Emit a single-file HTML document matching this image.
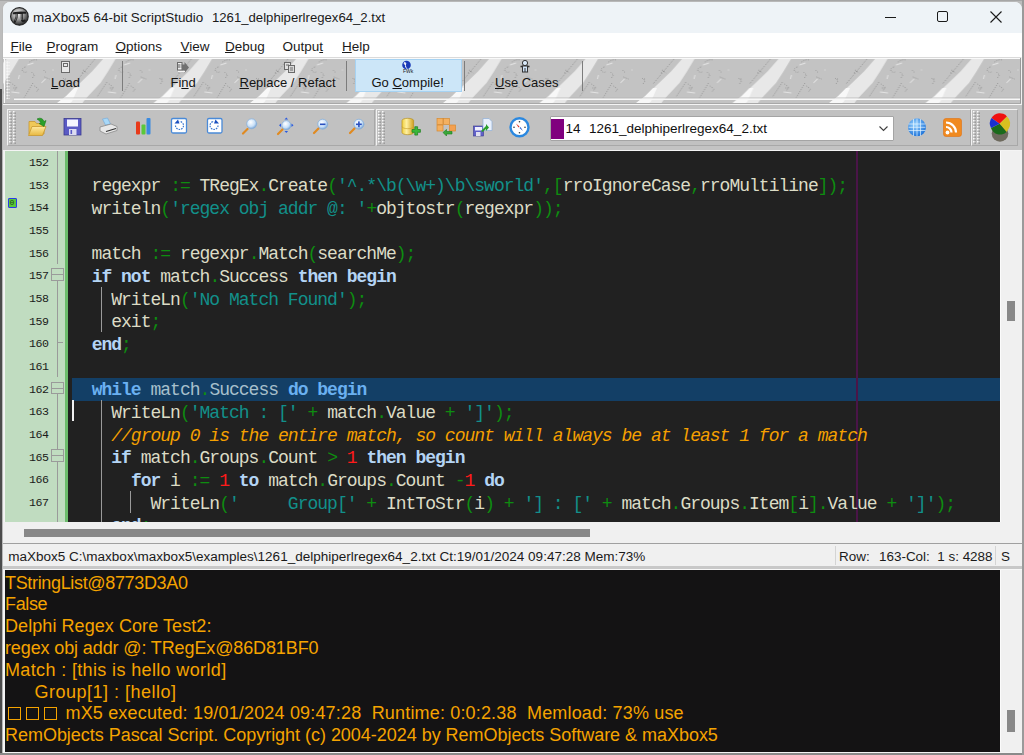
<!DOCTYPE html><html><head><meta charset="utf-8"><style>
*{margin:0;padding:0;box-sizing:border-box}
html,body{width:1024px;height:755px;overflow:hidden;background:#bdbdbd;font-family:"Liberation Sans",sans-serif;position:relative}
.a{position:absolute}
.t{position:absolute;white-space:pre;line-height:1}
.u{text-decoration:underline;text-decoration-thickness:1px;text-underline-offset:0.5px}
.code{position:absolute;left:0;white-space:pre;font-family:"Liberation Mono",monospace;font-size:18px;letter-spacing:-0.99px;line-height:22.67px;height:22.67px;color:#dcdcc6}
.o{color:#0e8c10}.s{color:#12908a}.k{color:#b4d4f4;font-weight:bold}.n{color:#ff1a1a}.c{color:#f5a000;font-style:italic}
.sel .k{color:#6ab0f0}.sel{color:#a8c0cc}
.ln{position:absolute;left:0;width:48.7px;text-align:right;font-family:'Liberation Mono',monospace;font-size:11.6px;letter-spacing:-0.4px;color:#1a1a1a;line-height:22.67px;height:22.67px}
.out{position:absolute;left:5px;white-space:pre;font-size:18px;color:#f5a300;line-height:21.7px}
.ico{position:absolute}
</style></head><body>
<div class="a" style="left:0;top:89px;width:2px;height:666px;background:#4b4b4b"></div>
<div class="a" style="left:0;top:0;width:1024px;height:1px;background:#a6a6a6"></div>
<div class="a" style="left:2px;top:1px;width:1021px;height:753px;background:#f0f0f0;border-radius:8px 8px 0 0;border:1px solid #b8b8b8;border-bottom:none"></div>
<div class="a" style="left:3px;top:2px;width:1019px;height:31px;background:#eef3f7;border-radius:7px 7px 0 0"></div>
<div class="a" style="left:3px;top:33px;width:1019px;height:24px;background:#ffffff"></div>
<svg class="ico" style="left:10px;top:7px" width="19" height="19" viewBox="0 0 19 19">
<defs><radialGradient id="gball" cx="0.42" cy="0.35" r="0.65"><stop offset="0" stop-color="#f4f4f4"/><stop offset="0.45" stop-color="#a8a8a8"/><stop offset="1" stop-color="#2a2a2a"/></radialGradient></defs>
<circle cx="9.4" cy="9.4" r="8.8" fill="url(#gball)" stroke="#262626" stroke-width="1.2"/>
<path d="M3.8 6.3 Q9 5.2 15.2 5.8 M6.8 6 Q7.2 11 4.8 14.8 M11.8 6 Q11.6 11 12.2 13.6 Q13 14.6 14.6 13.6" stroke="#202020" stroke-width="2.1" fill="none" stroke-linecap="round"/>
<path d="M6.6 6.8 Q6.8 10.5 5.4 13.5 M11.6 7 Q11.5 10.5 11.9 13" stroke="#9a9a9a" stroke-width="0.7" fill="none"/>
</svg>
<div class="t" style="left:33px;top:11px;font-size:13.45px;color:#1a1a1a">maXbox5 64-bit ScriptStudio</div>
<div class="t" style="left:212px;top:11px;font-size:13.15px;color:#1a1a1a">1261_delphiperlregex64_2.txt</div>
<div class="a" style="left:885px;top:17px;width:11px;height:1px;background:#1a1a1a"></div>
<div class="a" style="left:937px;top:11px;width:11px;height:11px;border:1px solid #1a1a1a;border-radius:2px"></div>
<svg class="ico" style="left:990px;top:11px" width="12" height="12" viewBox="0 0 12 12"><path d="M0.5 0.5 L11.5 11.5 M11.5 0.5 L0.5 11.5" stroke="#1a1a1a" stroke-width="1.1"/></svg>
<div class="t" style="left:10.5px;top:39.6px;font-size:13.5px;color:#1a1a1a"><span class="u">F</span>ile</div>
<div class="t" style="left:46.5px;top:39.6px;font-size:13.5px;color:#1a1a1a"><span class="u">P</span>rogram</div>
<div class="t" style="left:115.5px;top:39.6px;font-size:13.5px;color:#1a1a1a"><span class="u">O</span>ptions</div>
<div class="t" style="left:180.5px;top:39.6px;font-size:13.5px;color:#1a1a1a"><span class="u">V</span>iew</div>
<div class="t" style="left:225.0px;top:39.6px;font-size:13.5px;color:#1a1a1a"><span class="u">D</span>ebug</div>
<div class="t" style="left:282.5px;top:39.6px;font-size:13.5px;color:#1a1a1a">Outpu<span class="u">t</span></div>
<div class="t" style="left:342.0px;top:39.6px;font-size:13.5px;color:#1a1a1a"><span class="u">H</span>elp</div>
<svg class="ico" style="left:0;top:0" width="1024" height="110" viewBox="0 0 1024 110">
<defs>
<pattern id="tex" patternUnits="userSpaceOnUse" x="55" y="57" width="96.5" height="47">
<rect x="0" y="0" width="96.5" height="47" fill="#c3c3c3"/>
<polygon points="48,2 60.5,2 53,14.6 45.5,26 33,39.2 28.5,44.5 27,47 1,47 4,44.5 11,39.2 25,26 37,14.6" fill="#e8e8e8"/>
<polygon points="4,44.5 11,39.2 19,31 23,31 17,44.5 14,47 1,47" fill="#f8f8f8"/>
<g stroke="#8e8e8e" stroke-width="0.9" fill="none" stroke-dasharray="1 1.3">
<path d="M40 2 L19 27"/><path d="M28 13 l4 3 M27 16 l3 -2"/>
<path d="M8 21 l3 3 l-2 3 M10 22 l2 0"/>
<path d="M52 25 L42 40"/><path d="M54 27 l4 3 l-2 4 M55 31 l3 0"/>
<path d="M71 5 q4 -3 8 -2"/>
<path d="M67 10 q-4 1 -3 4 q2 2 4 1"/>
<path d="M73 15 l3 3 l-2 3"/>
<path d="M74.5 26 L65.5 41"/><path d="M76 29 l4 3 l-2 3"/>
<path d="M86 20 l5 2"/><path d="M85 13 l3 3"/>
<path d="M-20 27 L-4 8"/>
</g>
<g stroke="#ececec" stroke-width="1" fill="none" opacity="0.75">
<path d="M69 8 l6 -2"/><path d="M61 18 l-1 4"/><path d="M83 26 l4 -4"/><path d="M94 13 l1 0"/><path d="M53 35 l8 1"/>
</g>
</pattern>
</defs>
<rect x="3" y="57" width="1018" height="47" fill="url(#tex)"/>
<rect x="3" y="57" width="1018" height="1" fill="#dadada"/>
<rect x="3" y="58" width="1018" height="1" fill="#fafafa"/>
<rect x="14" y="97.6" width="1006" height="0.9" fill="#b4b4b4"/><rect x="14" y="98.5" width="1006" height="1.5" fill="#f8f8f8"/>
<rect x="3" y="103" width="1018" height="1" fill="#a8a8a8"/>
<rect x="3" y="104" width="1018" height="1" fill="#f4f4f4"/>
<rect x="4" y="58" width="1" height="45" fill="#fafafa"/>
<rect x="1020" y="58" width="1" height="45" fill="#9a9a9a"/>
</svg>
<div class="a" style="left:6px;top:61px;width:4px;height:38px;background-image:radial-gradient(circle,#f8f8f8 0.9px,transparent 1.1px);background-size:3px 3px;opacity:.9"></div>
<div class="a" style="left:121.5px;top:60.5px;width:1.1px;height:30.5px;background:#7c7c7c"></div>
<div class="a" style="left:345.5px;top:60.5px;width:1.1px;height:30.5px;background:#7c7c7c"></div>
<div class="a" style="left:463.5px;top:60.5px;width:1.1px;height:30.5px;background:#7c7c7c"></div>
<div class="a" style="left:581.5px;top:60.5px;width:1.1px;height:30.5px;background:#7c7c7c"></div>
<div class="a" style="left:355px;top:59px;width:107px;height:33px;background:#cce6f8;border:1px solid #a6d2f2"></div>
<div class="t" style="left:51.0px;top:76px;font-size:13px;color:#141414"><span class="u">L</span>oad</div>
<div class="t" style="left:170.5px;top:76px;font-size:13px;color:#141414">Fi<span class="u">n</span>d</div>
<div class="t" style="left:239.5px;top:76px;font-size:13px;color:#141414"><span class="u">R</span>eplace / Refact</div>
<div class="t" style="left:371.5px;top:76px;font-size:13px;color:#141414">Go <span class="u">C</span>ompile!</div>
<div class="t" style="left:495.0px;top:76px;font-size:13px;color:#141414"><span class="u">U</span>se Cases</div>
<svg class="ico" style="left:0;top:0" width="600" height="80" viewBox="0 0 600 80">
<g fill="none" stroke="#6a6a6a" stroke-width="1">
<rect x="61.5" y="61.5" width="8" height="11" fill="#e8e8e8"/><rect x="63.5" y="63.5" width="4" height="3"/>
<rect x="177.5" y="62.5" width="4.5" height="7.5" fill="#f0f0f0"/><path d="M179 64v4M180.5 65h1M180.5 67h1" stroke="#555"/><path d="M182 64.5h2.5v-2.5l4.5 5.5l-4.5 5.5v-2.5h-2.5z" fill="#707070" stroke="none"/><path d="M178 71.5h7" stroke="#f4f4f4" stroke-width="1.2"/>
<rect x="284.5" y="62.5" width="6" height="7" fill="#e0e0e0"/><rect x="288.5" y="65.5" width="6" height="7" fill="#d8d8d8"/><path d="M286 65h3M290 68h3M290 70h3"/>
</g>
<circle cx="406.5" cy="65" r="4.3" fill="#1a3ab8"/><path d="M404 62.5q2 1 1.5 3t2 3.5" stroke="#fff" stroke-width="1" fill="none"/><circle cx="405" cy="63.5" r="1.3" fill="#ffffff" opacity=".8"/>
<text x="403" y="73" font-family="Liberation Sans" font-size="5" fill="#1a1a1a">FWk</text>
<g><circle cx="525" cy="63" r="2.6" fill="#d8e8f8" stroke="#333" stroke-width="1"/><path d="M520.5 66.5h9" stroke="#333" stroke-width="1.6"/><rect x="522.5" y="66" width="5" height="6" fill="#cfe2f6" stroke="#333" stroke-width="1"/><path d="M525 68v4" stroke="#333" stroke-width="1"/></g>
</svg>
<div class="a" style="left:3px;top:105px;width:1019px;height:46px;background:#c3c3c3"></div>
<div class="a" style="left:7px;top:109px;width:368px;height:37px;border-top:1px solid #f2f2f2;border-left:1px solid #f2f2f2;border-bottom:1px solid #a8a8a8;border-right:1px solid #a8a8a8;background:#c1c1c1"></div>
<svg class="ico" style="left:9px;top:111px" width="7" height="33" viewBox="0 0 7 33"><rect x="0" y="0" width="1.5" height="1.5" fill="#fafafa"/><rect x="1.5" y="1.5" width="1.3" height="1.3" fill="#8a8a8a"/><rect x="0" y="3" width="1.5" height="1.5" fill="#fafafa"/><rect x="1.5" y="4.5" width="1.3" height="1.3" fill="#8a8a8a"/><rect x="0" y="6" width="1.5" height="1.5" fill="#fafafa"/><rect x="1.5" y="7.5" width="1.3" height="1.3" fill="#8a8a8a"/><rect x="0" y="9" width="1.5" height="1.5" fill="#fafafa"/><rect x="1.5" y="10.5" width="1.3" height="1.3" fill="#8a8a8a"/><rect x="0" y="12" width="1.5" height="1.5" fill="#fafafa"/><rect x="1.5" y="13.5" width="1.3" height="1.3" fill="#8a8a8a"/><rect x="0" y="15" width="1.5" height="1.5" fill="#fafafa"/><rect x="1.5" y="16.5" width="1.3" height="1.3" fill="#8a8a8a"/><rect x="0" y="18" width="1.5" height="1.5" fill="#fafafa"/><rect x="1.5" y="19.5" width="1.3" height="1.3" fill="#8a8a8a"/><rect x="0" y="21" width="1.5" height="1.5" fill="#fafafa"/><rect x="1.5" y="22.5" width="1.3" height="1.3" fill="#8a8a8a"/><rect x="0" y="24" width="1.5" height="1.5" fill="#fafafa"/><rect x="1.5" y="25.5" width="1.3" height="1.3" fill="#8a8a8a"/><rect x="0" y="27" width="1.5" height="1.5" fill="#fafafa"/><rect x="1.5" y="28.5" width="1.3" height="1.3" fill="#8a8a8a"/><rect x="0" y="30" width="1.5" height="1.5" fill="#fafafa"/><rect x="1.5" y="31.5" width="1.3" height="1.3" fill="#8a8a8a"/><rect x="4" y="0" width="1.5" height="1.5" fill="#fafafa"/><rect x="5.5" y="1.5" width="1.3" height="1.3" fill="#8a8a8a"/><rect x="4" y="3" width="1.5" height="1.5" fill="#fafafa"/><rect x="5.5" y="4.5" width="1.3" height="1.3" fill="#8a8a8a"/><rect x="4" y="6" width="1.5" height="1.5" fill="#fafafa"/><rect x="5.5" y="7.5" width="1.3" height="1.3" fill="#8a8a8a"/><rect x="4" y="9" width="1.5" height="1.5" fill="#fafafa"/><rect x="5.5" y="10.5" width="1.3" height="1.3" fill="#8a8a8a"/><rect x="4" y="12" width="1.5" height="1.5" fill="#fafafa"/><rect x="5.5" y="13.5" width="1.3" height="1.3" fill="#8a8a8a"/><rect x="4" y="15" width="1.5" height="1.5" fill="#fafafa"/><rect x="5.5" y="16.5" width="1.3" height="1.3" fill="#8a8a8a"/><rect x="4" y="18" width="1.5" height="1.5" fill="#fafafa"/><rect x="5.5" y="19.5" width="1.3" height="1.3" fill="#8a8a8a"/><rect x="4" y="21" width="1.5" height="1.5" fill="#fafafa"/><rect x="5.5" y="22.5" width="1.3" height="1.3" fill="#8a8a8a"/><rect x="4" y="24" width="1.5" height="1.5" fill="#fafafa"/><rect x="5.5" y="25.5" width="1.3" height="1.3" fill="#8a8a8a"/><rect x="4" y="27" width="1.5" height="1.5" fill="#fafafa"/><rect x="5.5" y="28.5" width="1.3" height="1.3" fill="#8a8a8a"/><rect x="4" y="30" width="1.5" height="1.5" fill="#fafafa"/><rect x="5.5" y="31.5" width="1.3" height="1.3" fill="#8a8a8a"/></svg>
<div class="a" style="left:376px;top:109px;width:595px;height:37px;border-top:1px solid #f2f2f2;border-left:1px solid #f2f2f2;border-bottom:1px solid #a8a8a8;border-right:1px solid #a8a8a8;background:#c1c1c1"></div>
<svg class="ico" style="left:378px;top:111px" width="7" height="33" viewBox="0 0 7 33"><rect x="0" y="0" width="1.5" height="1.5" fill="#fafafa"/><rect x="1.5" y="1.5" width="1.3" height="1.3" fill="#8a8a8a"/><rect x="0" y="3" width="1.5" height="1.5" fill="#fafafa"/><rect x="1.5" y="4.5" width="1.3" height="1.3" fill="#8a8a8a"/><rect x="0" y="6" width="1.5" height="1.5" fill="#fafafa"/><rect x="1.5" y="7.5" width="1.3" height="1.3" fill="#8a8a8a"/><rect x="0" y="9" width="1.5" height="1.5" fill="#fafafa"/><rect x="1.5" y="10.5" width="1.3" height="1.3" fill="#8a8a8a"/><rect x="0" y="12" width="1.5" height="1.5" fill="#fafafa"/><rect x="1.5" y="13.5" width="1.3" height="1.3" fill="#8a8a8a"/><rect x="0" y="15" width="1.5" height="1.5" fill="#fafafa"/><rect x="1.5" y="16.5" width="1.3" height="1.3" fill="#8a8a8a"/><rect x="0" y="18" width="1.5" height="1.5" fill="#fafafa"/><rect x="1.5" y="19.5" width="1.3" height="1.3" fill="#8a8a8a"/><rect x="0" y="21" width="1.5" height="1.5" fill="#fafafa"/><rect x="1.5" y="22.5" width="1.3" height="1.3" fill="#8a8a8a"/><rect x="0" y="24" width="1.5" height="1.5" fill="#fafafa"/><rect x="1.5" y="25.5" width="1.3" height="1.3" fill="#8a8a8a"/><rect x="0" y="27" width="1.5" height="1.5" fill="#fafafa"/><rect x="1.5" y="28.5" width="1.3" height="1.3" fill="#8a8a8a"/><rect x="0" y="30" width="1.5" height="1.5" fill="#fafafa"/><rect x="1.5" y="31.5" width="1.3" height="1.3" fill="#8a8a8a"/><rect x="4" y="0" width="1.5" height="1.5" fill="#fafafa"/><rect x="5.5" y="1.5" width="1.3" height="1.3" fill="#8a8a8a"/><rect x="4" y="3" width="1.5" height="1.5" fill="#fafafa"/><rect x="5.5" y="4.5" width="1.3" height="1.3" fill="#8a8a8a"/><rect x="4" y="6" width="1.5" height="1.5" fill="#fafafa"/><rect x="5.5" y="7.5" width="1.3" height="1.3" fill="#8a8a8a"/><rect x="4" y="9" width="1.5" height="1.5" fill="#fafafa"/><rect x="5.5" y="10.5" width="1.3" height="1.3" fill="#8a8a8a"/><rect x="4" y="12" width="1.5" height="1.5" fill="#fafafa"/><rect x="5.5" y="13.5" width="1.3" height="1.3" fill="#8a8a8a"/><rect x="4" y="15" width="1.5" height="1.5" fill="#fafafa"/><rect x="5.5" y="16.5" width="1.3" height="1.3" fill="#8a8a8a"/><rect x="4" y="18" width="1.5" height="1.5" fill="#fafafa"/><rect x="5.5" y="19.5" width="1.3" height="1.3" fill="#8a8a8a"/><rect x="4" y="21" width="1.5" height="1.5" fill="#fafafa"/><rect x="5.5" y="22.5" width="1.3" height="1.3" fill="#8a8a8a"/><rect x="4" y="24" width="1.5" height="1.5" fill="#fafafa"/><rect x="5.5" y="25.5" width="1.3" height="1.3" fill="#8a8a8a"/><rect x="4" y="27" width="1.5" height="1.5" fill="#fafafa"/><rect x="5.5" y="28.5" width="1.3" height="1.3" fill="#8a8a8a"/><rect x="4" y="30" width="1.5" height="1.5" fill="#fafafa"/><rect x="5.5" y="31.5" width="1.3" height="1.3" fill="#8a8a8a"/></svg>
<div class="a" style="left:971px;top:109px;width:47px;height:37px;border-top:1px solid #f2f2f2;border-left:1px solid #f2f2f2;border-bottom:1px solid #a8a8a8;border-right:1px solid #a8a8a8;background:#c1c1c1"></div>
<svg class="ico" style="left:973px;top:111px" width="7" height="33" viewBox="0 0 7 33"><rect x="0" y="0" width="1.5" height="1.5" fill="#fafafa"/><rect x="1.5" y="1.5" width="1.3" height="1.3" fill="#8a8a8a"/><rect x="0" y="3" width="1.5" height="1.5" fill="#fafafa"/><rect x="1.5" y="4.5" width="1.3" height="1.3" fill="#8a8a8a"/><rect x="0" y="6" width="1.5" height="1.5" fill="#fafafa"/><rect x="1.5" y="7.5" width="1.3" height="1.3" fill="#8a8a8a"/><rect x="0" y="9" width="1.5" height="1.5" fill="#fafafa"/><rect x="1.5" y="10.5" width="1.3" height="1.3" fill="#8a8a8a"/><rect x="0" y="12" width="1.5" height="1.5" fill="#fafafa"/><rect x="1.5" y="13.5" width="1.3" height="1.3" fill="#8a8a8a"/><rect x="0" y="15" width="1.5" height="1.5" fill="#fafafa"/><rect x="1.5" y="16.5" width="1.3" height="1.3" fill="#8a8a8a"/><rect x="0" y="18" width="1.5" height="1.5" fill="#fafafa"/><rect x="1.5" y="19.5" width="1.3" height="1.3" fill="#8a8a8a"/><rect x="0" y="21" width="1.5" height="1.5" fill="#fafafa"/><rect x="1.5" y="22.5" width="1.3" height="1.3" fill="#8a8a8a"/><rect x="0" y="24" width="1.5" height="1.5" fill="#fafafa"/><rect x="1.5" y="25.5" width="1.3" height="1.3" fill="#8a8a8a"/><rect x="0" y="27" width="1.5" height="1.5" fill="#fafafa"/><rect x="1.5" y="28.5" width="1.3" height="1.3" fill="#8a8a8a"/><rect x="0" y="30" width="1.5" height="1.5" fill="#fafafa"/><rect x="1.5" y="31.5" width="1.3" height="1.3" fill="#8a8a8a"/><rect x="4" y="0" width="1.5" height="1.5" fill="#fafafa"/><rect x="5.5" y="1.5" width="1.3" height="1.3" fill="#8a8a8a"/><rect x="4" y="3" width="1.5" height="1.5" fill="#fafafa"/><rect x="5.5" y="4.5" width="1.3" height="1.3" fill="#8a8a8a"/><rect x="4" y="6" width="1.5" height="1.5" fill="#fafafa"/><rect x="5.5" y="7.5" width="1.3" height="1.3" fill="#8a8a8a"/><rect x="4" y="9" width="1.5" height="1.5" fill="#fafafa"/><rect x="5.5" y="10.5" width="1.3" height="1.3" fill="#8a8a8a"/><rect x="4" y="12" width="1.5" height="1.5" fill="#fafafa"/><rect x="5.5" y="13.5" width="1.3" height="1.3" fill="#8a8a8a"/><rect x="4" y="15" width="1.5" height="1.5" fill="#fafafa"/><rect x="5.5" y="16.5" width="1.3" height="1.3" fill="#8a8a8a"/><rect x="4" y="18" width="1.5" height="1.5" fill="#fafafa"/><rect x="5.5" y="19.5" width="1.3" height="1.3" fill="#8a8a8a"/><rect x="4" y="21" width="1.5" height="1.5" fill="#fafafa"/><rect x="5.5" y="22.5" width="1.3" height="1.3" fill="#8a8a8a"/><rect x="4" y="24" width="1.5" height="1.5" fill="#fafafa"/><rect x="5.5" y="25.5" width="1.3" height="1.3" fill="#8a8a8a"/><rect x="4" y="27" width="1.5" height="1.5" fill="#fafafa"/><rect x="5.5" y="28.5" width="1.3" height="1.3" fill="#8a8a8a"/><rect x="4" y="30" width="1.5" height="1.5" fill="#fafafa"/><rect x="5.5" y="31.5" width="1.3" height="1.3" fill="#8a8a8a"/></svg>
<svg class="ico" style="left:0;top:105px" width="1024" height="46" viewBox="0 105 1024 46">
<defs>
<linearGradient id="fold" x1="0" y1="0" x2="0" y2="1"><stop offset="0" stop-color="#ffe9a0"/><stop offset="1" stop-color="#e8b840"/></linearGradient>
<radialGradient id="lens" cx="0.4" cy="0.35" r="0.7"><stop offset="0" stop-color="#ffffff"/><stop offset="0.6" stop-color="#c8e0f8"/><stop offset="1" stop-color="#6a9ad0"/></radialGradient>
<radialGradient id="globe" cx="0.4" cy="0.35" r="0.7"><stop offset="0" stop-color="#9ad4ff"/><stop offset="1" stop-color="#1a70d8"/></radialGradient>
<linearGradient id="cyl" x1="0" y1="0" x2="1" y2="0"><stop offset="0" stop-color="#f0d040"/><stop offset="0.4" stop-color="#fff0a0"/><stop offset="1" stop-color="#d0a020"/></linearGradient>
</defs>
<!-- open folder -->
<path d="M29 121.5h6l1.5 2h7.5v10.5h-15z" fill="#f0c858" stroke="#c89830" stroke-width="0.8"/>
<path d="M28.5 135.5l3.5 -9h14l-3.5 9z" fill="url(#fold)" stroke="#c89830" stroke-width="0.8"/>
<path d="M37 119q5 -2.5 7 2.5l2 -1l-2 6l-5 -3l2 -0.5q-1.5 -3 -4 -4z" fill="#2aa02a" stroke="#1a7a1a" stroke-width="0.6"/>
<!-- floppy -->
<rect x="64" y="118.5" width="17" height="16.5" fill="#5a5ac4" stroke="#3a3a90" stroke-width="0.8"/>
<rect x="67" y="119.5" width="11" height="7" fill="#f4f4ff"/>
<rect x="69" y="129" width="7.5" height="6" fill="#dcdcf0"/><rect x="70.5" y="130" width="1.6" height="4" fill="#5a5ac4"/>
<!-- printer -->
<path d="M102.5 119l5 -1l3 6l-5 1z" fill="#a8d8f8" stroke="#70a8d8" stroke-width="0.6"/>
<path d="M100 127l11 -3l6 2.5v4l-11 3.5l-6 -3z" fill="#e8e8e8" stroke="#8a8a8a" stroke-width="0.8"/>
<path d="M106 131.5l10 -3" stroke="#303030" stroke-width="1.2"/>
<!-- bar chart -->
<rect x="136" y="121.5" width="4" height="13" rx="1" fill="#e83a1a"/>
<rect x="141.5" y="124.5" width="4" height="10" rx="1" fill="#5ac83a"/>
<rect x="146.5" y="118" width="4" height="16.5" rx="1" fill="#3a8ae0"/>
<!-- undo / redo -->
<rect x="171.5" y="118.5" width="15" height="14.5" rx="1.5" fill="#ffffff" stroke="#4a8ad8" stroke-width="1.3"/>
<path d="M175.5 125.5a4 4 0 1 0 4 -4" fill="none" stroke="#3a78d0" stroke-width="1.2" stroke-dasharray="1.6 1"/><path d="M174.5 123.5l3.5 -4l1.5 4z" fill="#1a50c0"/>
<rect x="207.5" y="118.5" width="14.5" height="14.5" rx="1.5" fill="#ffffff" stroke="#4a8ad8" stroke-width="1.3"/>
<path d="M218 125.5a4 4 0 1 1 -4 -4" fill="none" stroke="#3a78d0" stroke-width="1.2" stroke-dasharray="1.6 1"/><path d="M219 123.5l-3.5 -4l-1.5 4z" fill="#1a50c0"/>
<!-- magnifiers -->
<g stroke-linecap="round">
<path d="M243 133.5l4.5 -4.5" stroke="#e08a20" stroke-width="2.2"/><circle cx="251.7" cy="123.8" r="5" fill="url(#lens)" stroke="#8ab0d8" stroke-width="0.8"/>
<path d="M278 134l4.5 -4.5" stroke="#e08a20" stroke-width="2.2"/><circle cx="286.4" cy="125.2" r="4.6" fill="url(#lens)" stroke="#8ab0d8" stroke-width="0.8"/>
<path d="M314 133l4.5 -4.5" stroke="#e08a20" stroke-width="2.2"/><circle cx="322.7" cy="124.2" r="5" fill="url(#lens)" stroke="#8ab0d8" stroke-width="0.8"/>
<path d="M350 133l4.5 -4.5" stroke="#e08a20" stroke-width="2.2"/><circle cx="358.9" cy="124.2" r="5" fill="url(#lens)" stroke="#8ab0d8" stroke-width="0.8"/>
</g>
<path d="M284.5 119.5l1.8 -2l1.8 2zM284.5 131l1.8 2l1.8 -2zM281 123.5l-2 1.8l2 1.8zM291.5 123.5l2 1.8l-2 1.8z" fill="#2a5ae0"/>
<rect x="320" y="123.5" width="5.5" height="1.6" fill="#2a50c0"/>
<rect x="356" y="123.5" width="5.8" height="1.6" fill="#2a50c0"/><rect x="358.1" y="121.4" width="1.6" height="5.8" fill="#2a50c0"/>
<!-- db add -->
<path d="M402 120.5a5.8 2.2 0 0 1 11.6 0v12a5.8 2.2 0 0 1 -11.6 0z" fill="url(#cyl)" stroke="#b89020" stroke-width="0.7"/>
<path d="M402 126.5a5.8 2.2 0 0 0 11.6 0" fill="none" stroke="#c8a030" stroke-width="0.7"/>
<path d="M412 129.5h2.8v-2.8h2.8v2.8h2.8v2.8h-2.8v2.8h-2.8v-2.8h-2.8z" fill="#3ab83a" stroke="#1a801a" stroke-width="0.7"/>
<!-- blocks -->
<rect x="437" y="118.5" width="6" height="6" fill="#f4b060" stroke="#d88a30" stroke-width="0.7"/><rect x="443.5" y="118.5" width="6" height="6" fill="#f4b060" stroke="#d88a30" stroke-width="0.7"/><rect x="437" y="125" width="6" height="6" fill="#f4b060" stroke="#d88a30" stroke-width="0.7"/>
<rect x="449.5" y="125" width="6" height="6" fill="#f4a050" stroke="#d88a30" stroke-width="0.7"/>
<path d="M443 132.5l3.5 -3v2h5.5v2.5h-5.5v2z" fill="#3aa83a" stroke="#1a801a" stroke-width="0.6"/>
<!-- save export -->
<rect x="473.5" y="126" width="10" height="10" fill="#6060c8" stroke="#3a3a90" stroke-width="0.6"/><rect x="475" y="127" width="7" height="3.5" fill="#f0f0ff"/><rect x="476" y="132" width="4.5" height="4" fill="#e0e0f0"/>
<path d="M483 118.5h6l3 3v9h-9z" fill="#e8f0fc" stroke="#90b0d8" stroke-width="0.7"/>
<path d="M481 131l5 -5v-2l3 3.5l-3 3.5v-2l-3.5 3z" fill="#2aa02a"/>
<!-- compass -->
<circle cx="519.5" cy="127.3" r="9" fill="#ffffff" stroke="#2a88e0" stroke-width="2.4"/>
<path d="M516 123.5l3.5 3l-1 1z" fill="#e03020"/><path d="M523 131l-3.5 -3l1 -1z" fill="#2a60d0"/>
<circle cx="514" cy="127.3" r="0.8" fill="#333"/><circle cx="525" cy="127.3" r="0.8" fill="#333"/><circle cx="519.5" cy="121.8" r="0.8" fill="#333"/><circle cx="519.5" cy="132.8" r="0.8" fill="#333"/>
<!-- globe -->
<circle cx="917" cy="127.3" r="9" fill="url(#globe)"/>
<g stroke="#e8f6ff" stroke-width="0.8" fill="none" opacity="0.85"><path d="M908.5 124h17M908.5 127.3h17M908.5 130.5h17M913.5 119v17M917 118.5v18M920.5 119v17"/></g>
<!-- rss -->
<rect x="943.5" y="118.5" width="18" height="18" rx="2.5" fill="#f08a20" stroke="#e07010" stroke-width="0.6"/>
<circle cx="947.5" cy="132.5" r="1.9" fill="#fff"/>
<path d="M946 127a5.5 5.5 0 0 1 5.5 5.5M946 122.5a10 10 0 0 1 10 10" stroke="#fff" stroke-width="2.2" fill="none"/>
<!-- ball -->
<circle cx="1000" cy="133.5" r="8.3" fill="#6e6a5e"/>
<path d="M999.6 123.8L991.5 118a9.5 9.5 0 0 1 15.5 -1.5z" fill="#f01010"/>
<path d="M999.6 123.8L1007 116.5a9.5 9.5 0 0 1 1.5 12.5l-2 3z" fill="#d8c020"/>
<path d="M999.6 123.8L1006.5 132a9.5 9.5 0 0 1 -15.5 -4z" fill="#1a6a1a"/>
<path d="M999.6 123.8L991 128a9.5 9.5 0 0 1 0.5 -10z" fill="#1a30d0"/>
</svg>
<div class="a" style="left:549.5px;top:116px;width:344px;height:24.5px;background:#fff;border:1px solid #a4a4a4;border-radius:1px"></div>
<div class="a" style="left:551px;top:118.5px;width:12.5px;height:20.5px;background:#80007e"></div>
<div class="t" style="left:565.5px;top:122.3px;font-size:13.5px;color:#101010">14</div>
<div class="t" style="left:589px;top:122.3px;font-size:13.5px;color:#101010">1261_delphiperlregex64_2.txt</div>
<svg class="ico" style="left:879px;top:126px" width="9" height="6" viewBox="0 0 9 6"><path d="M0.5 0.5L4.5 4.5L8.5 0.5" stroke="#404040" stroke-width="1.1" fill="none"/></svg>
<div class="a" style="left:3px;top:150px;width:1019px;height:1px;background:#f4f4f4"></div>
<div class="a" style="left:4px;top:151px;width:1px;height:371px;background:#f4f4f4"></div>
<div class="a" style="left:5px;top:151px;width:60px;height:371px;background:#c0dcc0"></div>
<div class="a" style="left:65px;top:151px;width:3px;height:371px;background:#6cbc6c"></div>
<div class="a" style="left:68px;top:151px;width:932px;height:371px;background:#212121"></div>
<div class="a" style="left:0;top:151px;width:60px;height:371px;overflow:hidden"><div class="ln" style="top:0.90px">152</div><div class="ln" style="top:23.57px">153</div><div class="ln" style="top:46.24px">154</div><div class="ln" style="top:68.91px">155</div><div class="ln" style="top:91.58px">156</div><div class="ln" style="top:114.25px">157</div><div class="ln" style="top:136.92px">158</div><div class="ln" style="top:159.59px">159</div><div class="ln" style="top:182.26px">160</div><div class="ln" style="top:204.93px">161</div><div class="ln" style="top:227.60px">162</div><div class="ln" style="top:250.27px">163</div><div class="ln" style="top:272.94px">164</div><div class="ln" style="top:295.61px">165</div><div class="ln" style="top:318.28px">166</div><div class="ln" style="top:340.95px">167</div><div class="ln" style="top:363.62px">168</div></div>
<div class="a" style="left:57.0px;top:151.0px;width:1px;height:113.0px;background:#9a9a9a"></div>
<div class="a" style="left:57.0px;top:281.0px;width:1px;height:96.0px;background:#9a9a9a"></div>
<div class="a" style="left:57px;top:341.5px;width:6px;height:1px;background:#9a9a9a"></div>
<div class="a" style="left:57.0px;top:394.0px;width:1px;height:55.0px;background:#9a9a9a"></div>
<div class="a" style="left:57.0px;top:462.0px;width:1px;height:60.0px;background:#9a9a9a"></div>
<div class="a" style="left:50.5px;top:268.0px;width:13px;height:12.5px;border:1px solid #9a9a9a"></div>
<div class="a" style="left:51px;top:274.0px;width:12px;height:1px;background:#9a9a9a"></div>
<div class="a" style="left:50.5px;top:381.5px;width:13px;height:12.5px;border:1px solid #9a9a9a"></div>
<div class="a" style="left:51px;top:387.5px;width:12px;height:1px;background:#9a9a9a"></div>
<div class="a" style="left:50.5px;top:449.2px;width:13px;height:12.5px;border:1px solid #9a9a9a"></div>
<div class="a" style="left:51px;top:455.2px;width:12px;height:1px;background:#9a9a9a"></div>
<div class="a" style="left:7.5px;top:197.5px;width:9px;height:10.5px;border:1.5px solid #2a3ae8;background:#58c838;border-radius:1px"></div>
<div class="t" style="left:9.5px;top:199px;font-size:8px;color:#1a4a1a;font-family:Liberation Mono">0</div>
<div class="a" style="left:67px;top:151px;width:933px;height:371px;overflow:hidden"><div class="a" style="left:5px;top:227.30px;width:933px;height:22.4px;background:#133f66"></div><div class="a" style="left:789.2px;top:0;width:1.9px;height:371px;background:#4a1548"></div><div class="a" style="left:34.0px;top:136.02px;width:1.3px;height:45.34px;background:#9a9a9a"></div><div class="a" style="left:34.0px;top:249.37px;width:1.3px;height:121.63px;background:#9a9a9a"></div><div class="a" style="left:63.0px;top:340.05px;width:1.3px;height:22.17px;background:#9a9a9a"></div><div class="code" style="left:5px;top:24.27px">  regexpr <span class="o">:=</span> TRegEx<span class="o">.</span>Create<span class="o">(</span><span class="s">&#x27;^.*\b(\w+)\b\sworld&#x27;</span><span class="o">,[</span>rroIgnoreCase<span class="o">,</span>rroMultiline<span class="o">]);</span></div><div class="code" style="left:5px;top:46.94px">  writeln<span class="o">(</span><span class="s">&#x27;regex obj addr @: &#x27;</span><span class="o">+</span>objtostr<span class="o">(</span>regexpr<span class="o">));</span></div><div class="code" style="left:5px;top:92.28px">  match <span class="o">:=</span> regexpr<span class="o">.</span>Match<span class="o">(</span>searchMe<span class="o">);</span></div><div class="code" style="left:5px;top:114.95px">  <span class="k">if</span> <span class="k">not</span> match<span class="o">.</span>Success <span class="k">then</span> <span class="k">begin</span></div><div class="code" style="left:5px;top:137.62px">    WriteLn<span class="o">(</span><span class="s">&#x27;No Match Found&#x27;</span><span class="o">);</span></div><div class="code" style="left:5px;top:160.29px">    exit<span class="o">;</span></div><div class="code" style="left:5px;top:182.96px">  <span class="k">end</span><span class="o">;</span></div><div class="code sel" style="left:5px;top:228.30px">  <span class="k">while</span> match<span class="o">.</span>Success <span class="k">do</span> <span class="k">begin</span></div><div class="code" style="left:5px;top:250.97px">    WriteLn<span class="o">(</span><span class="s">&#x27;Match : [&#x27;</span><span class="o"> + </span>match<span class="o">.</span>Value<span class="o"> + </span><span class="s">&#x27;]&#x27;</span><span class="o">);</span></div><div class="code" style="left:5px;top:273.64px">    <span class="c">//group 0 is the entire match, so count will always be at least 1 for a match</span></div><div class="code" style="left:5px;top:296.31px">    <span class="k">if</span> match<span class="o">.</span>Groups<span class="o">.</span>Count <span class="o">&gt;</span> <span class="n">1</span> <span class="k">then</span> <span class="k">begin</span></div><div class="code" style="left:5px;top:318.98px">      <span class="k">for</span> i <span class="o">:=</span> <span class="n">1</span> <span class="k">to</span> match<span class="o">.</span>Groups<span class="o">.</span>Count <span class="o">-</span><span class="n">1</span> <span class="k">do</span></div><div class="code" style="left:5px;top:341.65px">        WriteLn<span class="o">(</span><span class="s">&#x27;     Group[&#x27;</span><span class="o"> + </span>IntToStr<span class="o">(</span>i<span class="o">)</span><span class="o"> + </span><span class="s">&#x27;] : [&#x27;</span><span class="o"> + </span>match<span class="o">.</span>Groups<span class="o">.</span>Item<span class="o">[</span>i<span class="o">]</span><span class="o">.</span>Value<span class="o"> + </span><span class="s">&#x27;]&#x27;</span><span class="o">);</span></div><div class="code" style="left:5px;top:364.32px">    <span class="k">end</span><span class="o">;</span></div><div class="a" style="left:5.0px;top:249.37px;width:1.6px;height:21px;background:#f0f0f0"></div></div>
<div class="a" style="left:1000px;top:151px;width:1px;height:371px;background:#fbfbfb"></div>
<div class="a" style="left:1001px;top:151px;width:21px;height:371px;background:#f0f0f0"></div>
<div class="a" style="left:1007px;top:301px;width:8px;height:20px;background:#888888"></div>
<div class="a" style="left:3px;top:522px;width:998px;height:21px;background:#f0f0f0"></div>
<div class="a" style="left:24px;top:529px;width:566px;height:8px;background:#888888"></div>
<div class="a" style="left:3px;top:543px;width:1019px;height:1px;background:#a0a0a0"></div>
<div class="a" style="left:3px;top:544px;width:1019px;height:22px;background:#f0f0f0"></div>
<div class="t" style="left:8.2px;top:549.7px;font-size:13.52px;color:#1a1a1a">maXbox5 C:\maxbox\maxbox5\examples\1261_delphiperlregex64_2.txt Ct:19/01/2024 09:47:28 Mem:73%</div>
<div class="a" style="left:835px;top:546px;width:1px;height:19px;background:#d4d4d4"></div>
<div class="a" style="left:994.5px;top:546px;width:1px;height:19px;background:#d4d4d4"></div>
<div class="t" style="left:839px;top:550px;font-size:13.45px;color:#1a1a1a">Row:</div>
<div class="t" style="left:879px;top:550px;font-size:13.45px;color:#1a1a1a">163-Col:  1 s: 4288</div>
<div class="t" style="left:1001px;top:550px;font-size:13.45px;color:#1a1a1a">S</div>
<div class="a" style="left:3px;top:566px;width:1019px;height:3px;background:#c8c8c8"></div>
<div class="a" style="left:3px;top:569px;width:1019px;height:1px;background:#f8f8f8"></div>
<div class="a" style="left:3px;top:570px;width:2px;height:182px;background:#f4f4f4"></div>
<div class="a" style="left:5px;top:570px;width:995px;height:182px;background:#141314"></div>
<div class="a" style="left:1000px;top:570px;width:1px;height:181px;background:#fbfbfb"></div>
<div class="a" style="left:1001px;top:570px;width:21px;height:181px;background:#f0f0f0"></div>
<div class="a" style="left:1007px;top:710px;width:8px;height:22px;background:#888888"></div>
<div class="a" style="left:3px;top:752px;width:1019px;height:1px;background:#f4f4f4"></div>
<div class="a" style="left:0;top:753px;width:1024px;height:2px;background:#8a8a8a"></div>
<div class="a" style="left:1022px;top:0;width:2px;height:755px;background:#9a9a9a"></div>
<div class="out" style="left:5.0px;top:572.60px;letter-spacing:-0.34px">TStringList@8773D3A0</div>
<div class="out" style="left:5.0px;top:594.40px;letter-spacing:-0.35px">False</div>
<div class="out" style="left:5.0px;top:616.20px;letter-spacing:0.07px">Delphi Regex Core Test2:</div>
<div class="out" style="left:5.0px;top:638.00px;letter-spacing:-0.12px">regex obj addr @: TRegEx@86D81BF0</div>
<div class="out" style="left:5.0px;top:659.80px;letter-spacing:0.36px">Match : [this is hello world]</div>
<div class="out" style="left:34.5px;top:681.60px;letter-spacing:0.50px">Group[1] : [hello]</div>
<div class="out" style="left:65.5px;top:703.40px;letter-spacing:0.17px">mX5 executed: 19/01/2024 09:47:28  Runtime: 0:0:2.38  Memload: 73% use</div>
<div class="a" style="left:7.8px;top:707.00px;width:13.6px;height:13px;border:1.5px solid #f5a300"></div>
<div class="a" style="left:25.9px;top:707.00px;width:13.6px;height:13px;border:1.5px solid #f5a300"></div>
<div class="a" style="left:43.9px;top:707.00px;width:13.6px;height:13px;border:1.5px solid #f5a300"></div>
<div class="out" style="left:5.0px;top:725.20px;letter-spacing:-0.03px">RemObjects Pascal Script. Copyright (c) 2004-2024 by RemObjects Software &amp; maXbox5</div>
</body></html>
